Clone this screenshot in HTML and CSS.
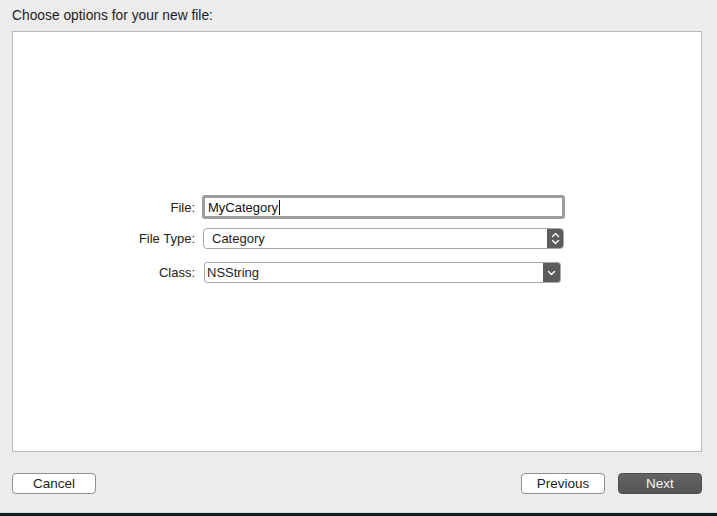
FILE: index.html
```html
<!DOCTYPE html>
<html>
<head>
<meta charset="utf-8">
<link rel="stylesheet" href="styles.css">
</head>
<body>
<div class="window">
  <div class="title">Choose options for your new file:</div>
  <div class="panel">
    <div class="form">
      <label class="label row-file">File:</label>
      <div class="textfield row-file"><span>MyCategory</span><span class="caret"></span></div>
      <label class="label row-type">File Type:</label>
      <div class="popup row-type">
        <span class="popup-text">Category</span>
        <span class="popup-btn">
          <svg width="9" height="13" viewBox="0 0 9 13"><path d="M1.5 4.5 L4.5 1.5 L7.5 4.5 M1.5 8.5 L4.5 11.5 L7.5 8.5" fill="none" stroke="#fff" stroke-width="1.4" stroke-linecap="round" stroke-linejoin="round"/></svg>
        </span>
      </div>
      <label class="label row-class">Class:</label>
      <div class="combo row-class">
        <span class="combo-text">NSString</span>
        <span class="combo-btn">
          <svg width="9" height="6" viewBox="0 0 9 6"><path d="M1.5 1.5 L4.5 4.5 L7.5 1.5" fill="none" stroke="#fff" stroke-width="1.4" stroke-linecap="round" stroke-linejoin="round"/></svg>
        </span>
      </div>
    </div>
  </div>
  <div class="footer">
    <button class="btn">Cancel</button>
    <div class="spacer"></div>
    <button class="btn">Previous</button>
    <button class="btn btn-primary">Next</button>
  </div>
</div>
<div class="strip"></div>
</body>
</html>
```
FILE: styles.css
```css
html, body {
  margin: 0;
  padding: 0;
}
body {
  width: 717px;
  height: 516px;
  background: #ececec;
  font-family: "Liberation Sans", Arial, sans-serif;
  font-size: 13px;
  color: #1e1e1e;
  display: flex;
  flex-direction: column;
  overflow: hidden;
}
.window {
  flex: 1;
  padding: 0 15px 0 12px;
  display: flex;
  flex-direction: column;
}
.title {
  padding-top: 8px;
  height: 31px;
  box-sizing: border-box;
  line-height: 16px;
  font-size: 13.8px;
}
.panel {
  height: 421px;
  box-sizing: border-box;
  background: #ffffff;
  border: 1px solid #b9b9b9;
  display: flex;
  flex-direction: column;
  justify-content: center;
  padding-bottom: 5px;
}
.form {
  display: grid;
  grid-template-columns: 182px 363px;
  column-gap: 7px;
  align-items: center;
}
.label {
  text-align: right;
  color: #222;
}
.row-type { margin-top: 9px; }
.row-class { margin-top: 13px; }
.textfield {
  height: 24px;
  box-sizing: border-box;
  border: 3px solid #9d9d9d;
  border-radius: 3px;
  padding: 0 0 0 3px;
  display: flex;
  align-items: center;
  color: #111;
  background: #fff;
}
.caret {
  width: 1px;
  height: 15px;
  background: #111;
  margin-left: 1px;
}
.popup {
  height: 21px;
  width: 361px;
  margin-left: 1px;
  box-sizing: border-box;
  border: 1px solid #a9a9a9;
  border-radius: 4px;
  display: flex;
  align-items: center;
  overflow: hidden;
  background: #fff;
}
.popup-text {
  flex: 1;
  padding-left: 8px;
}
.popup-btn {
  width: 16px;
  height: 100%;
  background: #5c5c5c;
  display: flex;
  align-items: center;
  justify-content: center;
}
.combo {
  height: 21px;
  width: 357px;
  margin-left: 2px;
  box-sizing: border-box;
  border: 1px solid #a9a9a9;
  border-radius: 3px;
  display: flex;
  align-items: center;
  overflow: hidden;
  background: #fff;
}
.combo-text {
  flex: 1;
  padding-left: 2px;
}
.combo-btn {
  width: 17px;
  height: 100%;
  background: #5c5c5c;
  display: flex;
  align-items: center;
  justify-content: center;
}
.footer {
  margin-top: 21px;
  display: flex;
  align-items: center;
}
.spacer { flex: 1; }
.btn {
  width: 84px;
  height: 21px;
  box-sizing: border-box;
  border: 1px solid #8e8e8e;
  border-radius: 4px;
  background: #ffffff;
  font-family: "Liberation Sans", Arial, sans-serif;
  font-size: 13.5px;
  color: #1e1e1e;
  padding: 0;
  line-height: 19px;
}
.btn-primary {
  margin-left: 13px;
  background: linear-gradient(#646464, #555555);
  border-color: #4e4e4e;
  color: #f4f4f4;
}
.strip {
  height: 3px;
  background: #0b1f21;
  border-top: 1px solid #d6d6d6;
}
```
